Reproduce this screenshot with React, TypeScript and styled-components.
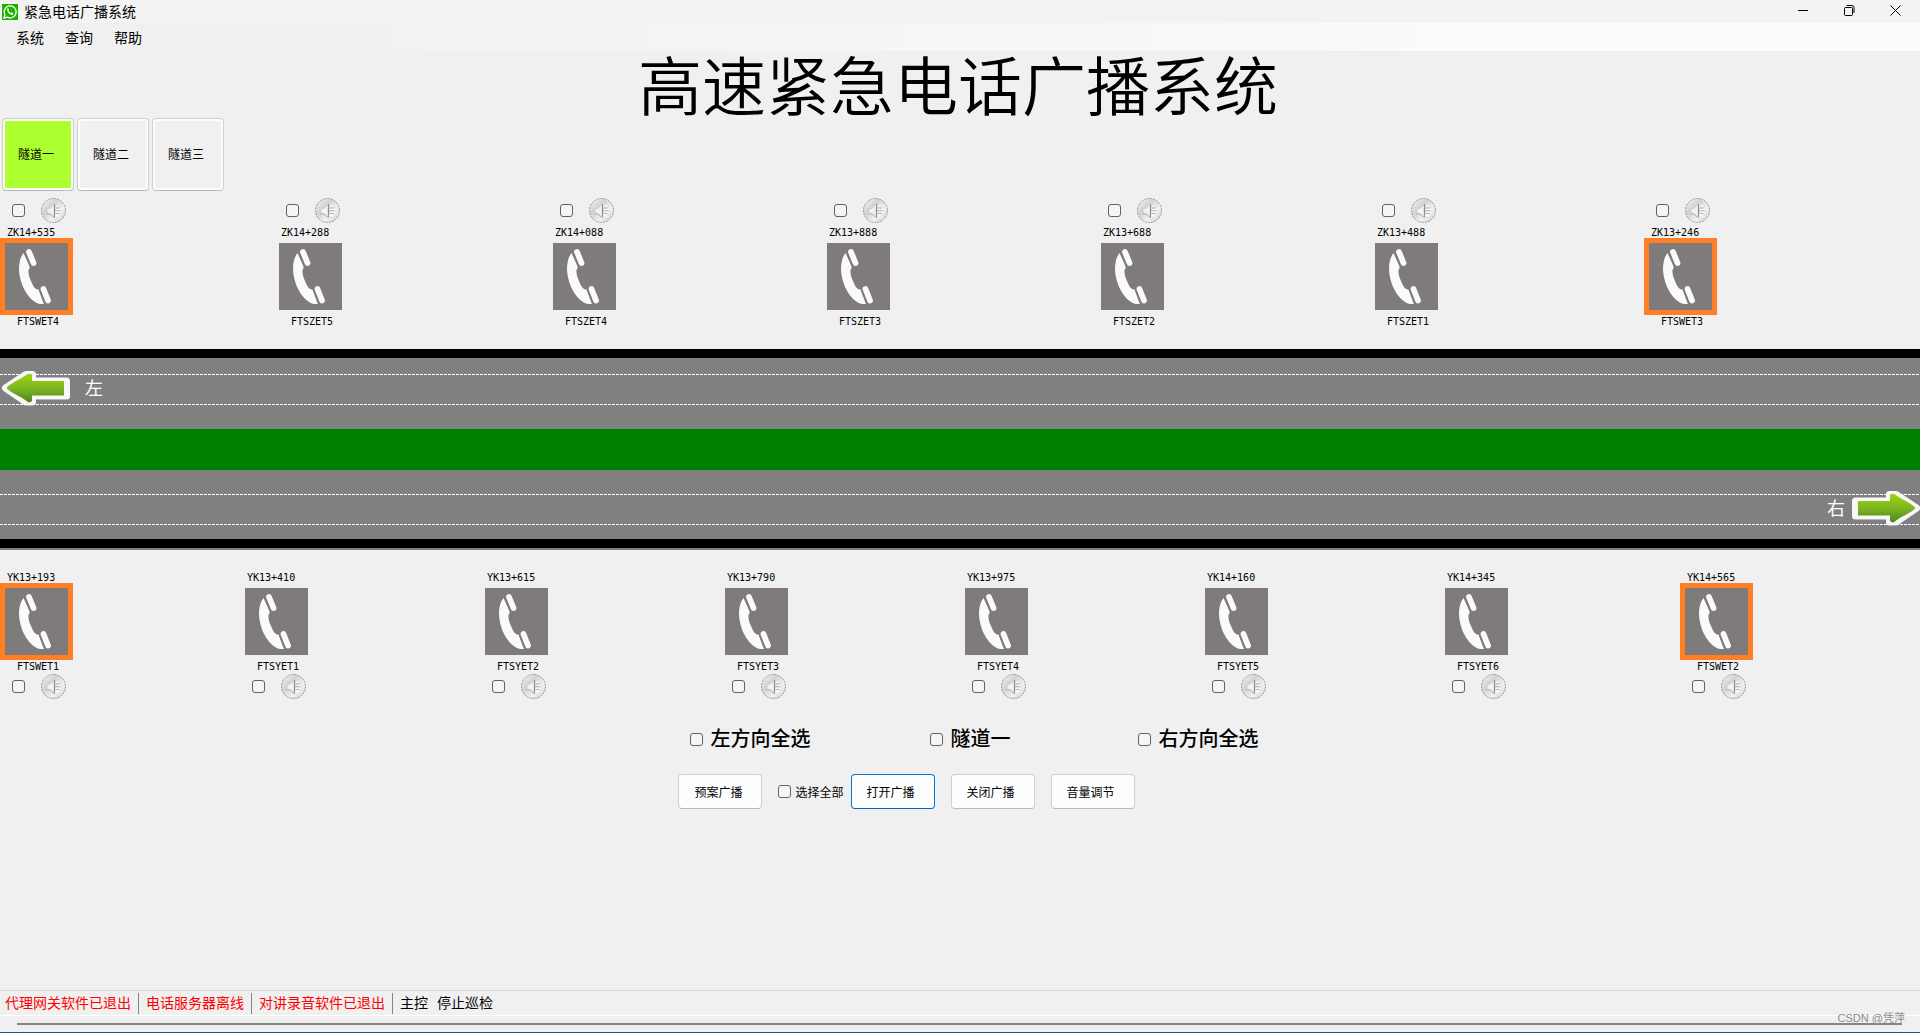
import React from "react";
import styled, { createGlobalStyle } from "styled-components";

const SANS = `"Liberation Sans", "Noto Sans CJK SC", sans-serif`;
const MONO = `"DejaVu Sans Mono", "Noto Sans CJK SC", monospace`;

const GlobalStyle = createGlobalStyle`
  *, *::before, *::after { box-sizing: border-box; }
  body { margin: 0; background: #f0f0f0; color: #000; font-family: ${SANS}; font-size: 12px; }
  button, input { font: inherit; color: inherit; margin: 0; }
`;

const Window = styled.div`
  display: flex;
  flex-direction: column;
  min-height: 100vh;
  border-bottom: 1px solid #2b5080;
`;

const TitleBar = styled.header`
  display: flex;
  align-items: center;
  height: 23px;
  padding: 0 2px;
  background: #f3f3f3;
  font-size: 14px;
  line-height: 20px;
`;

const AppName = styled.span`
  flex: 1;
  padding-left: 6px;
`;

const WindowButton = styled.button`
  display: flex;
  align-items: center;
  justify-content: center;
  width: 46px;
  height: 23px;
  padding: 0 0 2px;
  border: 0;
  background: transparent;
`;

const MenuBar = styled.nav`
  display: flex;
  align-items: center;
  gap: 21px;
  height: 28px;
  padding: 1px 16px 0;
  background: linear-gradient(90deg, #f0f0f0 10%, #fcfcfc 85%);
`;

const MenuItem = styled.button`
  padding: 0;
  border: 0;
  background: transparent;
  font-size: 14px;
  line-height: 20px;
`;

const Heading = styled.h1`
  margin: 0;
  padding: 5px 4px 0 0;
  text-align: center;
  font-size: 64px;
  line-height: 64px;
  height: 67px;
  font-weight: 350;
`;

const Tabs = styled.div`
  display: flex;
  gap: 3px;
  padding: 0 2px;
`;

const Tab = styled.button<{ $active?: boolean }>`
  width: 72px;
  height: 73px;
  padding: 0 4px 2px 0;
  border: 1px solid #d0d0d0;
  border-bottom-color: #bababa;
  border-radius: 4px;
  box-shadow: inset 0 0 0 2px #fdfdfd;
  background: ${(p) => (p.$active ? "#adff2f" : "#f0f0f0")};
  font-size: 12px;
`;

const Row = styled.section<{ $count: number }>`
  display: grid;
  grid-template-columns: repeat(${(p) => p.$count}, 1fr);
  padding-right: ${(p) => (p.$count === 7 ? 2 : 0)}px;
`;

const Station = styled.div`
  display: flex;
  flex-direction: column;
  align-items: flex-start;
  width: 73px;
  font-family: ${MONO};
  font-size: 10px;
  line-height: 14px;
`;

const Mark = styled.span`
  padding-left: 7px;
  line-height: 11px;
  white-space: nowrap;
`;

const StationName = styled.span`
  padding-left: 17px;
  white-space: nowrap;
`;

const Phone = styled.button<{ $alert?: boolean }>`
  display: block;
  width: 73px;
  height: 77px;
  padding: 0;
  border: 5px solid ${(p) => (p.$alert ? "#ff7f27" : "transparent")};
  background: #7f7b7a;
  background-clip: padding-box;
`;

const SelectLine = styled.div<{ $above?: boolean }>`
  display: flex;
  align-items: center;
  gap: 16px;
  height: 25px;
  padding-left: 12px;
  margin-bottom: ${(p) => (p.$above ? 4 : 0)}px;
`;

const SpeakerButton = styled.button`
  width: 25px;
  height: 25px;
  padding: 0;
  border: 0;
  background: transparent;
  svg { display: block; }
`;

const Check = styled.input.attrs({ type: "checkbox" })`
  appearance: none;
  flex: none;
  width: 13px;
  height: 13px;
  border: 1px solid #626262;
  border-radius: 3px;
  background: #f5f5f5;
  &:checked { background: #0067c0; }
`;

const Road = styled.section`
  border-top: 9px solid #000;
  border-bottom: 2px solid #808080;
  background: #808080;
`;

const Carriageway = styled.div<{ $last?: boolean }>`
  display: flex;
  flex-direction: column;
  padding: ${(p) => (p.$last ? "24px 0 14px" : "16px 0 24px")};
  border-bottom: ${(p) => (p.$last ? "9px solid #000" : "0")};
`;

const Dashes = styled.div`
  height: 1px;
  background: repeating-linear-gradient(90deg, #fff 0 3px, transparent 3px 4px);
`;

const Lane = styled.div<{ $right?: boolean }>`
  display: flex;
  align-items: center;
  justify-content: ${(p) => (p.$right ? "flex-end" : "flex-start")};
  gap: ${(p) => (p.$right ? 7 : 14)}px;
  height: 29px;
  padding-bottom: 2px;
  color: #fff;
  font-size: 18px;
  line-height: 20px;
`;

const Median = styled.div`
  height: 41px;
  background: #008000;
`;

const Groups = styled.section`
  display: flex;
  justify-content: center;
  padding-left: 28px;
`;

const GroupLabel = styled.label<{ $width: number }>`
  display: flex;
  align-items: center;
  gap: 8px;
  width: ${(p) => p.$width}px;
  font-size: 20px;
  line-height: 24px;
  font-weight: 500;
  white-space: nowrap;
`;

const Actions = styled.section`
  display: flex;
  justify-content: center;
  align-items: center;
  gap: 16px;
  padding-right: 107px;
`;

const SmallLabel = styled.label`
  display: flex;
  align-items: center;
  gap: 4px;
  white-space: nowrap;
`;

const ActionGroup = styled.div`
  display: flex;
  align-items: center;
  gap: 7px;
`;

const Action = styled.button<{ $focus?: boolean }>`
  width: 84px;
  height: 35px;
  padding: 0 4px 0 0;
  border: 1px solid ${(p) => (p.$focus ? "#0078d4" : "#d0d0d0")};
  border-bottom-color: ${(p) => (p.$focus ? "#0067c0" : "#bababa")};
  border-radius: 4px;
  background: #fdfdfd;
`;

const Gap = styled.div<{ $h: number }>`
  flex: none;
  height: ${(p) => p.$h}px;
`;

const Footer = styled.footer`
  position: relative;
  margin-top: auto;
  border-top: 1px solid #d5d5d5;
`;

const Status = styled.div`
  display: flex;
  align-items: center;
  height: 25px;
  padding: 0 0 0 5px;
  border-bottom: 1px solid #fff;
  font-size: 14px;
  line-height: 21px;
`;

const StatusItem = styled.span<{ $error?: boolean }>`
  padding-right: ${(p) => (p.$error ? 7 : 9)}px;
  margin-right: ${(p) => (p.$error ? 7 : 0)}px;
  border-right: ${(p) => (p.$error ? "1px solid #858585" : "0")};
  color: ${(p) => (p.$error ? "#f00" : "#000")};
  white-space: nowrap;
`;

const Track = styled.div`
  height: 2px;
  margin: 7px 18px 7px 17px;
  background: #83857f;
`;

const Watermark = styled.span`
  position: absolute;
  right: 15px;
  bottom: 5px;
  font-size: 11px;
  line-height: 18px;
  color: #8c8c8c;
`;

const Logo = () => (
  <svg width="16" height="16" viewBox="0 0 16 16" aria-hidden="true">
    <rect width="16" height="16" fill="#1fb100" />
    <path d="M2 14l.9-3.3A6 6 0 1 1 5.300 13.100z" fill="none" stroke="#fff" strokeWidth="1.300" />
    <path d="M5.300 4.800c.6-.8 1.200-.5 1.400.1l.4 1c.1.400-.6.800-.5 1.100.4.900 1.200 1.700 2.200 2.100.4.100.7-.8 1.100-.7l1.200.6c.5.300.3 1.100-.3 1.500-2.200 1.300-6.500-2.500-5.500-5.700z" fill="#fff" />
  </svg>
);

const Handset = () => (
  <svg width="63" height="67" viewBox="0 0 63 67" aria-hidden="true" display="block">
    <path d="M18.500 10C15 14 13.500 22 14.200 29C15.500 44 25 59 35 61H39L33.500 46.500C30 47 28 43 26 38C24 34 23.300 30 23.500 27L25 24Z" fill="#fafafa" />
    <path d="M24 9L28.500 20M38.500 46L43 57.500" stroke="#fafafa" strokeWidth="5.800" strokeLinecap="round" />
    <path d="M19.800 9.500L26 25.500M34.200 46L40 61.500" stroke="#7f7b7a" strokeWidth="1.300" />
  </svg>
);

const Speaker = () => (
  <svg width="25" height="25" viewBox="0 0 25 25" aria-hidden="true">
    <defs>
      <linearGradient id="disc" x1="0" y1="0" x2="1" y2="1">
        <stop offset="0" stopColor="#fafafa" />
        <stop offset=".35" stopColor="#d2d2d2" />
        <stop offset=".65" stopColor="#f0f0f0" />
        <stop offset="1" stopColor="#cccccc" />
      </linearGradient>
    </defs>
    <circle cx="12.500" cy="12.500" r="12" fill="url(#disc)" stroke="#8a8a94" strokeWidth=".9" strokeDasharray="2 1" />
    <path d="M6 10.500h3l4-4v13l-4-4H6z" fill="#f3f3ee" stroke="#c2c1bc" strokeWidth=".6" />
    <path d="M5 16h4l4 3.500" fill="none" stroke="#aaa9a4" strokeWidth=".8" />
    <path d="M13.500 6v13.500" stroke="#8f8f8f" />
    <path d="M15.500 8.500l3-1.500M15.500 11.500h4.500M15.500 14h4.500M15.500 17l3 1.500" stroke="#fff" strokeWidth="1.500" strokeDasharray="2 .7" />
    <path d="M14.500 10h4M14 12.800h6M14.500 15.500h4" stroke="#a6a6a6" strokeWidth=".8" />
  </svg>
);

const Arrow = ({ right }: { right?: boolean }) => {
  const id = right ? "arrow-right" : "arrow-left";
  return (
    <svg width={right ? 68 : 71} height="35" viewBox={right ? "0 0 68 35" : "-2 0 71 35"} overflow="visible" aria-hidden="true">
      <defs>
        <linearGradient id={id} x1="0" y1="0" x2="0" y2="1">
          <stop offset="0" stopColor="#a0d40c" />
          <stop offset=".5" stopColor="#7db71f" />
          <stop offset="1" stopColor="#4f8423" />
        </linearGradient>
      </defs>
      <g transform={right ? "translate(68 0) scale(-1 1)" : undefined} strokeLinejoin="round">
        <path d="M3.500 17.500L25 4H30V10H64V26H30V32H25Z" fill="#666" stroke="#666" strokeWidth="6" opacity=".5" />
        <path d="M3.500 17L24 3.500H30.500V10H64.500V25H30.500V31H24Z" fill="#f5f5f5" stroke="#f8f8f8" strokeWidth="7" />
        <path d="M4.500 17C10 11 21 7 25 3.500Q27 2 30 3.500V10H62V24.500H30V30Q27 33 24 29.500C18 25 9 22 4.500 17Z" fill={`url(#${id})`} />
      </g>
    </svg>
  );
};

type StationData = [mark: string, name: string];

const LEFT: StationData[] = [
  ["ZK14+535", "FTSWET4"],
  ["ZK14+288", "FTSZET5"],
  ["ZK14+088", "FTSZET4"],
  ["ZK13+888", "FTSZET3"],
  ["ZK13+688", "FTSZET2"],
  ["ZK13+488", "FTSZET1"],
  ["ZK13+246", "FTSWET3"],
];

const RIGHT: StationData[] = [
  ["YK13+193", "FTSWET1"],
  ["YK13+410", "FTSYET1"],
  ["YK13+615", "FTSYET2"],
  ["YK13+790", "FTSYET3"],
  ["YK13+975", "FTSYET4"],
  ["YK14+160", "FTSYET5"],
  ["YK14+345", "FTSYET6"],
  ["YK14+565", "FTSWET2"],
];

const StationSelect = ({ name, above }: { name: string; above?: boolean }) => (
  <SelectLine $above={above}>
    <Check aria-label={name} />
    <SpeakerButton aria-label={`${name} 广播`}>
      <Speaker />
    </SpeakerButton>
  </SelectLine>
);

const StationRow = ({ items, below }: { items: StationData[]; below?: boolean }) => (
  <Row $count={items.length}>
    {items.map(([mark, name]) => (
      <Station key={name}>
        {!below && <StationSelect name={name} above />}
        <Mark>{mark}</Mark>
        <Phone $alert={name.startsWith("FTSW")} aria-label={`${name} 电话`}>
          <Handset />
        </Phone>
        <StationName>{name}</StationName>
        {below && <StationSelect name={name} />}
      </Station>
    ))}
  </Row>
);

export default function App() {
  return (
    <Window>
      <GlobalStyle />
      <TitleBar>
        <Logo />
        <AppName>紧急电话广播系统</AppName>
        <WindowButton aria-label="最小化">
          <svg width="10" height="11" viewBox="0 0 10 11"><path d="M0 5.500h10" stroke="#000" /></svg>
        </WindowButton>
        <WindowButton aria-label="还原">
          <svg width="11" height="11" viewBox="0 0 11 11" fill="none" stroke="#000">
            <rect x=".5" y="2.500" width="8" height="8" rx="1" />
            <path d="M2.500.5H8a2 2 0 0 1 2 2V8" />
          </svg>
        </WindowButton>
        <WindowButton aria-label="关闭">
          <svg width="11" height="11" viewBox="0 0 11 11"><path d="M.5.5l10 10M10.500.5l-10 10" stroke="#000" /></svg>
        </WindowButton>
      </TitleBar>
      <MenuBar>
        <MenuItem>系统</MenuItem>
        <MenuItem>查询</MenuItem>
        <MenuItem>帮助</MenuItem>
      </MenuBar>
      <Heading>高速紧急电话广播系统</Heading>
      <Tabs>
        <Tab $active>隧道一</Tab>
        <Tab>隧道二</Tab>
        <Tab>隧道三</Tab>
      </Tabs>
      <Gap $h={7} />
      <StationRow items={LEFT} />
      <Gap $h={20} />
      <Road>
        <Carriageway>
          <Dashes />
          <Lane>
            <Arrow />
            <span>左</span>
          </Lane>
          <Dashes />
        </Carriageway>
        <Median />
        <Carriageway $last>
          <Dashes />
          <Lane $right>
            <span>右</span>
            <Arrow right />
          </Lane>
          <Dashes />
        </Carriageway>
      </Road>
      <Gap $h={22} />
      <StationRow items={RIGHT} below />
      <Gap $h={28} />
      <Groups>
        <GroupLabel $width={240}><Check />左方向全选</GroupLabel>
        <GroupLabel $width={208}><Check />隧道一</GroupLabel>
        <GroupLabel $width={121}><Check />右方向全选</GroupLabel>
      </Groups>
      <Gap $h={23} />
      <Actions>
        <Action>预案广播</Action>
        <ActionGroup>
          <SmallLabel><Check />选择全部</SmallLabel>
          <Action $focus>打开广播</Action>
        </ActionGroup>
        <Action>关闭广播</Action>
        <Action>音量调节</Action>
      </Actions>
      <Footer>
        <Status>
          <StatusItem $error>代理网关软件已退出</StatusItem>
          <StatusItem $error>电话服务器离线</StatusItem>
          <StatusItem $error>对讲录音软件已退出</StatusItem>
          <StatusItem>主控</StatusItem>
          <StatusItem>停止巡检</StatusItem>
        </Status>
        <Track />
        <Watermark>CSDN @凭萍</Watermark>
      </Footer>
    </Window>
  );
}
